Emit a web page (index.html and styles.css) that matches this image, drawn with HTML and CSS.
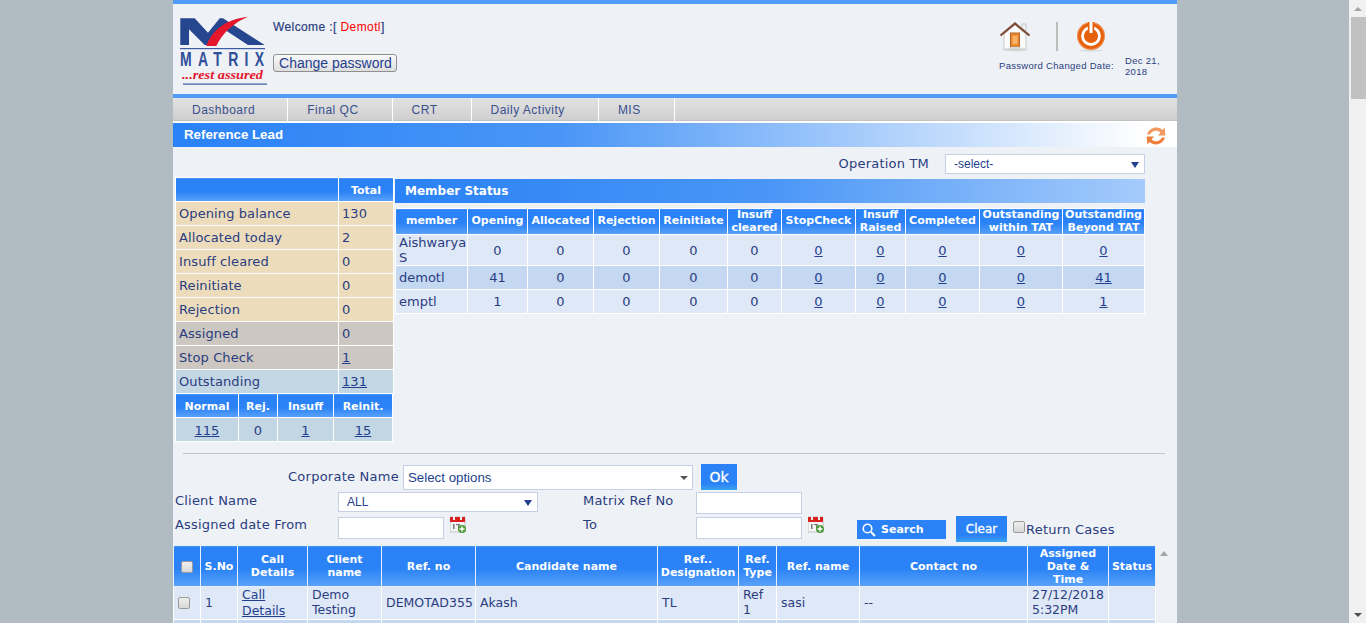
FILE: index.html
```html
<!DOCTYPE html>
<html lang="en">

<head>
  <meta charset="UTF-8">
  <title>Reference Lead</title>
  <link rel="stylesheet" href="styles.css">
</head>

<body>

  <div class="viewport">
    <div class="page">

      <header class="topbar">
        <svg class="logo" width="92" height="72" viewBox="0 0 92 72">
          <path d="M.3 4.300H14.700L28 18.700 39.700 4.300H43L84.700 31H68L46.300 16.700 33 31H24.700L9 15.300V31H.3z" fill="#26468f" />
          <path d="M26.300 32C33 14 48 5 68 2.700 55 8 43 18 36.300 32z" fill="#e3162c" />
          <rect x="0" y="34" width="85" height="1.200" fill="#3d5ba3" />
          <text class="logo-name" transform="scale(.7 1)" x="0" y="52.500">MATRIX</text>
          <text class="logo-tag" x="2" y="65" textLength="81" lengthAdjust="spacingAndGlyphs">...rest assured</text>
          <rect x="3" y="69.500" width="84" height="1.200" fill="#3d5ba3" />
        </svg>

        <div class="welcome">
          <div class="welcome-text">Welcome :[ <span class="user">Demotl</span>]</div>
          <button class="pass-btn">Change password</button>
        </div>

        <div class="top-right">
          <div class="top-icons">
            <svg width="32" height="31" viewBox="0 0 32 31">
              <ellipse cx="16" cy="29" rx="13" ry="1.500" fill="#d9dbdd" />
              <path d="M5 13 16 4l11 9v15H5z" fill="#fbfbfb" stroke="#c9c9c9" />
              <rect x="23" y="3" width="4" height="7" fill="#f2f2f2" stroke="#c9c9c9" />
              <path d="M1.500 14.500 16 2.500l14.500 12" fill="none" stroke="#7d4a35" stroke-width="2.200" />
              <rect x="11.500" y="12" width="9" height="14" fill="#e98a2c" stroke="#b9622a" />
              <rect x="13.500" y="15" width="5" height="8" fill="#f6b366" />
              <rect x="11" y="26" width="10" height="2" fill="#e3e3e3" stroke="#bbb" stroke-width=".5" />
            </svg>
            <span class="top-sep"></span>
            <svg width="30" height="31" viewBox="0 0 30 31">
              <ellipse cx="15" cy="29.500" rx="11" ry="1" fill="#dcdcdc" />
              <circle cx="15" cy="15" r="14" fill="#ef8a4a" />
              <circle cx="15" cy="15" r="12.800" fill="#e5610c" />
              <circle cx="15" cy="15" r="8.500" fill="none" stroke="#fff" stroke-width="2.800" />
              <rect x="11.800" y="1" width="6.400" height="11" fill="#e5610c" />
              <rect x="13.500" y="1" width="3" height="11" fill="#fff" />
            </svg>
          </div>
          <div class="pass-date">
            <span class="pass-label">Password Changed Date:</span>
            <span class="pass-value">Dec 21, 2018</span>
          </div>
        </div>
      </header>

      <nav class="nav">
        <a class="nav-item">Dashboard</a>
        <a class="nav-item">Final QC</a>
        <a class="nav-item">CRT</a>
        <a class="nav-item">Daily Activity</a>
        <a class="nav-item">MIS</a>
      </nav>

      <div class="title-row">
        <div class="title-bar">Reference Lead</div>
        <svg class="refresh" width="20" height="22" viewBox="0 0 20 22">
          <path d="M1 9.500C3 2.500 12 .5 16.300 5L18.500 2.500 19.500 10.500H12L14.500 7.500C11 4.500 6 5.500 4 9.500z" fill="#f3985f" />
          <path d="M19 12.500C17 19.500 8 21.500 3.700 17L1.500 19.500.5 11.500H8L5.500 14.500C9 17.500 14 16.500 16 12.500z" fill="#ee7f3c" />
        </svg>
      </div>

      <div class="content">
        <div class="tm-row">
          <span class="tm-label">Operation TM</span>
          <div class="select-box tm-select">
            <select><option>-select-</option></select>
          </div>
        </div>

        <div class="stats">
          <div class="stats-left">
            <table class="side-table">
              <tr><th></th><th>Total</th></tr>
              <tr class="tan"><td>Opening balance</td><td>130</td></tr>
              <tr class="tan"><td>Allocated today</td><td>2</td></tr>
              <tr class="tan"><td>Insuff cleared</td><td>0</td></tr>
              <tr class="tan"><td>Reinitiate</td><td>0</td></tr>
              <tr class="tan"><td>Rejection</td><td>0</td></tr>
              <tr class="stone"><td>Assigned</td><td>0</td></tr>
              <tr class="stone"><td>Stop Check</td><td><a href="#">1</a></td></tr>
              <tr class="steel"><td>Outstanding</td><td><a href="#">131</a></td></tr>
            </table>
            <table class="sub-table">
              <tr><th class="c-normal">Normal</th><th class="c-rej">Rej.</th><th class="c-insuff">Insuff</th><th>Reinit.</th></tr>
              <tr class="steel"><td><a href="#">115</a></td><td>0</td><td><a href="#">1</a></td><td><a href="#">15</a></td></tr>
            </table>
          </div>

          <div class="stats-right">
            <div class="member-bar">Member Status</div>
            <table class="member-table">
              <colgroup>
                <col class="m1"><col class="m2"><col class="m3"><col class="m4"><col class="m5">
                <col class="m6"><col class="m7"><col class="m8"><col class="m9"><col class="m10"><col>
              </colgroup>
              <tr>
                <th>member</th><th>Opening</th><th>Allocated</th><th>Rejection</th><th>Reinitiate</th>
                <th>Insuff cleared</th><th>StopCheck</th><th>Insuff Raised</th><th>Completed</th>
                <th>Outstanding within TAT</th><th>Outstanding Beyond TAT</th>
              </tr>
              <tr class="row-a row-tall">
                <td class="left">Aishwarya S</td><td>0</td><td>0</td><td>0</td><td>0</td><td>0</td>
                <td><a href="#">0</a></td><td><a href="#">0</a></td><td><a href="#">0</a></td><td><a href="#">0</a></td><td><a href="#">0</a></td>
              </tr>
              <tr class="row-b">
                <td class="left">demotl</td><td>41</td><td>0</td><td>0</td><td>0</td><td>0</td>
                <td><a href="#">0</a></td><td><a href="#">0</a></td><td><a href="#">0</a></td><td><a href="#">0</a></td><td><a href="#">41</a></td>
              </tr>
              <tr class="row-a">
                <td class="left">emptl</td><td>1</td><td>0</td><td>0</td><td>0</td><td>0</td>
                <td><a href="#">0</a></td><td><a href="#">0</a></td><td><a href="#">0</a></td><td><a href="#">0</a></td><td><a href="#">1</a></td>
              </tr>
            </table>
          </div>
        </div>

        <hr class="divider">

        <div class="corp-row">
          <label class="corp-label">Corporate Name</label>
          <div class="corp-select">
            <span>Select options</span>
            <i class="corp-arrow"></i>
          </div>
          <button class="btn btn-ok">Ok</button>
        </div>

        <div class="filter-row filter-row-1">
          <label class="f-label">Client Name</label>
          <div class="select-box client-select">
            <select><option>ALL</option></select>
          </div>
          <label class="f-label-2">Matrix Ref No</label>
          <input class="f-input" type="text">
        </div>

        <div class="filter-row filter-row-2">
          <label class="f-label">Assigned date From</label>
          <input class="f-input" type="text">
          <svg class="cal" width="16" height="17" viewBox="0 0 16 17">
            <use href="#cal-icon" />
          </svg>
          <label class="f-label-2 f-label-to">To</label>
          <input class="f-input" type="text">
          <svg class="cal" width="16" height="17" viewBox="0 0 16 17">
            <use href="#cal-icon" />
          </svg>
          <button class="btn btn-search">
            <svg width="14" height="14" viewBox="0 0 14 14">
              <circle cx="5.500" cy="5.500" r="4.300" fill="none" stroke="#fff" stroke-width="1.600" />
              <path d="M9 9l4 4" stroke="#fff" stroke-width="2" />
            </svg>
            Search
          </button>
          <button class="btn btn-clear">Clear</button>
          <label class="return-cases"><input class="check" type="checkbox">Return Cases</label>
        </div>

        <div class="list-wrap">
          <table class="list-table">
            <colgroup>
              <col class="l1"><col class="l2"><col class="l3"><col class="l4"><col class="l5"><col class="l6">
              <col class="l7"><col class="l8"><col class="l9"><col class="l10"><col class="l11"><col>
            </colgroup>
            <tr>
              <th><input class="check" type="checkbox"></th><th>S.No</th><th>Call Details</th><th>Client name</th><th>Ref. no</th>
              <th>Candidate name</th><th>Ref.. Designation</th><th>Ref. Type</th><th>Ref. name</th><th>Contact no</th>
              <th>Assigned<br>Date &amp;<br>Time</th><th>Status</th>
            </tr>
            <tr class="row-a">
              <td><input class="check" type="checkbox"></td><td>1</td><td class="cell-link"><a href="#">Call Details</a></td><td>Demo Testing</td>
              <td>DEMOTAD355</td><td>Akash</td><td>TL</td><td>Ref 1</td><td>sasi</td><td>--</td>
              <td>27/12/2018 5:32PM</td><td></td>
            </tr>
            <tr class="row-b row-next">
              <td></td><td></td><td><a href="#">Call Details</a></td><td></td>
              <td></td><td></td><td></td><td>Ref 1</td><td></td><td></td>
              <td>27/12/2018 5:30PM</td><td></td>
            </tr>
          </table>
          <i class="list-up"></i>
        </div>
      </div>
    </div>

    <div class="scrollbar">
      <i class="sb-up"></i>
      <div class="sb-thumb"></div>
      <i class="sb-down"></i>
    </div>
  </div>

  <svg class="defs" width="0" height="0">
    <symbol id="cal-icon" viewBox="0 0 16 17">
      <rect x="0" y="1" width="15" height="15" fill="#f4f4f4" stroke="#999" stroke-width=".5" />
      <rect x="0" y="1" width="15" height="5" fill="#d8201f" />
      <rect x="3" y="0" width="2" height="4" fill="#eee" />
      <rect x="10" y="0" width="2" height="4" fill="#eee" />
      <rect x="3" y="8" width="1.500" height="5" fill="#777" />
      <rect x="6" y="8" width="4" height="1.200" fill="#777" />
      <rect x="8" y="8" width="1.200" height="5" fill="#777" />
      <circle cx="12" cy="13" r="4" fill="#4f9b3a" />
      <path d="M12 10.500v5M9.500 13h5" stroke="#fff" stroke-width="1.500" />
    </symbol>
  </svg>

</body>

</html>
```

FILE: styles.css
```css
* {
  box-sizing: border-box;
}

html,
body {
  margin: 0;
  height: 623px;
  overflow: hidden;
}

body {
  font-family: "DejaVu Sans", Verdana, sans-serif;
  font-size: 12px;
  color: #2a3d80;
  background: #b1bcc2;
}

a {
  color: #23408f;
}

.defs {
  position: absolute;
}

.viewport {
  display: flex;
  height: 623px;
}

.page {
  width: 1004px;
  height: 623px;
  margin: 0 172px 0 173px;
  background: #eef1f5;
  overflow: hidden;
}

/* fake page scrollbar */
.scrollbar {
  width: 17px;
  height: 623px;
  background: #f1f1f1;
  display: flex;
  flex-direction: column;
  align-items: center;
}

.sb-up {
  margin-top: 7px;
  border: 4px solid transparent;
  border-top: 0;
  border-bottom: 4px solid #a3a3a3;
}

.sb-thumb {
  width: 15px;
  height: 82px;
  margin-top: 6px;
  margin-left: 1px;
  background: #c1c1c1;
}

.sb-down {
  margin-top: auto;
  margin-bottom: 6px;
  border: 4px solid transparent;
  border-bottom: 0;
  border-top: 4px solid #505050;
}

/* header */
.topbar {
  height: 98px;
  border-top: 4px solid #4f9bf8;
  border-bottom: 4px solid #4f9bf8;
  display: flex;
  padding: 10px 0 0 7px;
}

.logo {
  flex: none;
  width: 92px;
  height: 72px;
}

.logo-name {
  font-family: "Liberation Sans", Arial, sans-serif;
  font-size: 20px;
  font-weight: bold;
  letter-spacing: 9px;
  fill: #2f4f99;
}

.logo-tag {
  font-family: "Liberation Serif", serif;
  font-style: italic;
  font-weight: bold;
  font-size: 12.500px;
  fill: #e3162c;
}

.welcome {
  margin-left: 1px;
  padding-top: 6px;
}

.welcome-text {
  font-family: "Liberation Sans", Arial, sans-serif;
  font-size: 12px;
  -webkit-text-stroke: 0.2px #2a3d80;
  letter-spacing: 0.4px;
}

.user {
  color: #f00;
  -webkit-text-stroke: 0;
}

.pass-btn {
  display: block;
  width: 124px;
  height: 18px;
  margin-top: 20px;
  padding: 0 0 2px 1px;
  font-family: "Liberation Sans", Arial, sans-serif;
  font-size: 14px;
  color: #23408f;
  background: linear-gradient(#fafafa, #dedede);
  border: 1px solid #8f8f8f;
  border-radius: 3px;
}

.top-right {
  margin-left: auto;
  width: 178px;
  padding-top: 7px;
  font-family: "Liberation Sans", Arial, sans-serif;
  font-size: 9.500px;
}

.top-icons {
  display: flex;
  align-items: flex-start;
}

.top-sep {
  width: 2px;
  height: 29px;
  margin: 1px 18px 0 25px;
  background: #bdbdbd;
}

.pass-date {
  display: flex;
  align-items: flex-start;
  margin-top: 2px;
}

.pass-label {
  width: 126px;
  padding-top: 6px;
  letter-spacing: 0.3px;
}

.pass-value {
  width: 42px;
  padding-top: 1px;
  line-height: 11px;
  letter-spacing: 0.3px;
}

/* nav */
.nav {
  height: 25px;
  display: flex;
  background: linear-gradient(#e2e2e2, #d0d0d0 85%, #bdbdbd 92%, #fff 92%);
}

.nav-item {
  height: 23px;
  padding: 0 33px 0 19px;
  border-right: 1px solid #fff;
  font-family: "Liberation Sans", Arial, sans-serif;
  font-size: 12px;
  line-height: 24px;
  letter-spacing: 0.500px;
  color: #39508f;
}

.nav-item:first-child {
  padding-right: 32px;
}

/* title */
.title-row {
  height: 24px;
  display: flex;
  background: #fff;
  padding-right: 1px;
}

.title-bar {
  flex: 1;
  padding-left: 11px;
  font-family: "Liberation Sans", Arial, sans-serif;
  font-size: 13.300px;
  font-weight: bold;
  line-height: 23px;
  color: #fff;
  background: linear-gradient(90deg, #2a82f6 0%, #4a96f7 40%, #fff 100%);
}

.refresh {
  flex: none;
  margin: 2px 10px 0 1px;
}

.content {
  padding-left: 2px;
}

.tm-row {
  height: 30px;
  display: flex;
  justify-content: flex-end;
  align-items: flex-start;
  padding: 7px 32px 0 0;
}

.tm-label {
  margin-right: 16px;
  font-size: 13px;
  line-height: 20px;
  letter-spacing: 0.200px;
}

.select-box {
  position: relative;
  background: #fff;
  border: 1px solid #c5cfe5;
}

.select-box select {
  width: 100%;
  height: 100%;
  padding: 0 0 0 8px;
  border: 0;
  background: transparent;
  font-family: "Liberation Sans", Arial, sans-serif;
  font-size: 12px;
  color: #23408f;
  appearance: none;
}

.select-box::after {
  content: "";
  position: absolute;
  right: 5px;
  top: 7px;
  border: 4px solid transparent;
  border-bottom: 0;
  border-top: 6px solid #23408f;
}

.tm-select {
  width: 200px;
  height: 20px;
}

.client-select {
  width: 200px;
  height: 20px;
}

/* stats */
.stats {
  display: flex;
  align-items: flex-start;
  height: 276px;
}

.stats table {
  border-collapse: collapse;
  table-layout: fixed;
}

th {
  color: #fff;
  font-size: 11px;
  font-weight: bold;
  line-height: 13px;
  padding: 0 1px;
  border: 1px solid #fff;
  background: linear-gradient(#2a82f6, #2a82f6 55%, #5aa2f8);
}

td {
  border: 1px solid #fff;
  font-size: 13px;
  padding: 0 3px;
}

.stats-left {
  width: 218px;
}

.side-table {
  width: 218px;
}

.side-table th {
  height: 24px;
  width: 163px;
  padding-top: 1px;
}

.side-table th + th {
  width: 55px;
}

.side-table td {
  height: 24px;
  letter-spacing: 0.100px;
}

.tan td {
  background: #eddcbc;
}

.stone td {
  background: #cdc7c1;
}

.steel td {
  background: #c3d6e4;
}

.sub-table {
  width: 218px;
  margin-top: -1px;
}

.sub-table th {
  height: 24px;
  padding-top: 1px;
}

.sub-table td {
  height: 24px;
  padding-top: 1px;
  text-align: center;
}

.c-normal {
  width: 63px;
}

.c-rej {
  width: 39px;
}

.c-insuff {
  width: 56px;
}

.stats-right {
  width: 750px;
  margin-left: 2px;
  padding-top: 2px;
}

.member-bar {
  height: 24px;
  padding-left: 10px;
  font-size: 12px;
  font-weight: bold;
  line-height: 24px;
  color: #fff;
  background: linear-gradient(90deg, #2a82f6 0%, #4a96f7 50%, #a5cbfb 100%);
}

.member-table {
  width: 750px;
  margin-top: 5px;
}

.m1 { width: 72px; }
.m2 { width: 60px; }
.m3 { width: 66px; }
.m4 { width: 66px; }
.m5 { width: 68px; }
.m6 { width: 54px; }
.m7 { width: 74px; }
.m8 { width: 50px; }
.m9 { width: 74px; }
.m10 { width: 83px; }

.member-table th {
  height: 25px;
  line-height: 12.500px;
}

.member-table td {
  height: 24px;
  line-height: 15px;
  text-align: center;
}

.member-table td.left {
  text-align: left;
}

.member-table .row-tall td {
  height: 31px;
}

.member-table .row-tall td.left {
  vertical-align: top;
}

.row-a td {
  background: #dfe8f7;
}

.row-b td {
  background: #c4d8f2;
}

/* filters */
.divider {
  height: 1px;
  margin: 0 12px 0 8px;
  border: 0;
  background: #c2c6cc;
}

.corp-row {
  display: flex;
  align-items: flex-start;
  height: 28px;
  margin-top: 10px;
  padding-left: 113px;
}

.corp-label {
  font-size: 13px;
  line-height: 26px;
  letter-spacing: 0.250px;
}

.corp-select {
  width: 290px;
  height: 25px;
  margin: 1px 8px 0 4px;
  padding-left: 4px;
  display: flex;
  justify-content: space-between;
  align-items: center;
  background: #fff;
  border: 1px solid #c5cfe5;
  font-family: "Liberation Sans", Arial, sans-serif;
  font-size: 13.300px;
  color: #23408f;
}

.corp-arrow {
  margin-right: 4px;
  border: 4px solid transparent;
  border-bottom: 0;
  border-top: 4px solid #555;
}

.btn {
  border: 0;
  color: #fff;
  font-weight: bold;
  padding: 0;
  background: linear-gradient(#2a82f6, #2a82f6 75%, #3ba4ee);
  font-family: "DejaVu Sans", Verdana, sans-serif;
}

.btn-ok {
  width: 36px;
  height: 26px;
  font-size: 14px;
  font-weight: normal;
  -webkit-text-stroke: 0.3px #fff;
}

.filter-row {
  display: flex;
  align-items: flex-start;
}

.filter-row-1 {
  height: 25px;
}

.filter-row-2 {
  height: 28px;
}

.f-label {
  width: 163px;
  font-size: 13px;
  line-height: 17px;
  letter-spacing: 0.200px;
}

.f-label-2 {
  width: 113px;
  margin-left: 45px;
  font-size: 13px;
  line-height: 17px;
  letter-spacing: 0.200px;
}

.filter-row-2 .f-label {
  line-height: 15px;
}

.filter-row-2 .f-label-2 {
  line-height: 15px;
}

.f-label-to {
  margin-left: 117px;
}

.f-input {
  width: 106px;
  height: 22px;
  background: #fff;
  border: 1px solid #c5cfe5;
}

.cal {
  flex: none;
  margin: -1px 0 0 6px;
}

.btn-search {
  width: 89px;
  height: 19px;
  margin: 3px 0 0 33px;
  padding-left: 5px;
  display: flex;
  align-items: center;
  gap: 5px;
  font-size: 11px;
  background: #2a82f6;
}

.btn-clear {
  width: 51px;
  height: 26px;
  margin: -1px 0 0 10px;
  font-size: 12px;
  font-weight: normal;
  -webkit-text-stroke: 0.3px #fff;
}

.return-cases {
  display: flex;
  align-items: center;
  margin: 4px 0 0 6px;
  font-size: 13px;
  letter-spacing: 0.250px;
}

.return-cases input {
  margin: 0 1px 4px 0;
}

.check {
  appearance: none;
  width: 12px;
  height: 12px;
  margin: 0;
  vertical-align: middle;
  background: linear-gradient(#eeeeee, #d8d8d8);
  border: 1px solid #9a9a9a;
  border-radius: 2px;
}

/* list */
.list-wrap {
  display: flex;
  align-items: flex-start;
  margin-left: -2px;
}

.list-table {
  width: 983px;
  border-collapse: collapse;
  table-layout: fixed;
}

.l1 { width: 27px; }
.l2 { width: 37px; }
.l3 { width: 70px; }
.l4 { width: 74px; }
.l5 { width: 94px; }
.l6 { width: 182px; }
.l7 { width: 81px; }
.l8 { width: 38px; }
.l9 { width: 83px; }
.l10 { width: 168px; }
.l11 { width: 81px; }

.list-table th {
  height: 41px;
  border-color: #e6effa;
}

.list-table td {
  height: 33px;
  font-size: 12.500px;
  line-height: 15px;
  padding: 0 4px 2px;
}

.list-table td.cell-link {
  line-height: 16px;
  padding-bottom: 0;
}

.list-table .row-next td {
  height: 36px;
  padding-bottom: 0;
}

.list-up {
  margin: 6px 0 0 4px;
  border: 4px solid transparent;
  border-top: 0;
  border-bottom: 5px solid #a3a3a3;
}
```
